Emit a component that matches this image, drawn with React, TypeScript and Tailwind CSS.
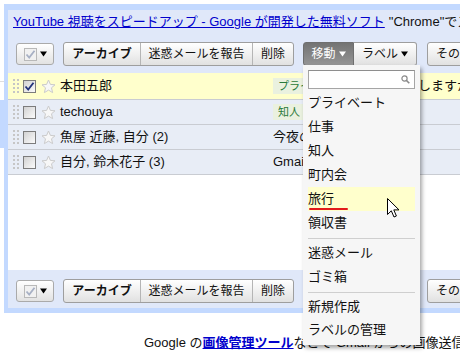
const FONT = "font-['Liberation_Sans','Noto_Sans_CJK_JP',sans-serif]";

type Row = {
  name: string;
  chip?: string;
  subject: string;
  selected?: boolean;
};

const rows: Row[] = [
  { name: "本田五郎", chip: "プライベート", subject: "週末はどうしますか", selected: true },
  { name: "techouya", chip: "知人", subject: "" },
  { name: "魚屋 近藤, 自分 (2)", subject: "今夜の飲み会" },
  { name: "自分, 鈴木花子 (3)", subject: "Gmail の使い方" },
];

function Grip() {
  const dots = [];
  for (const y of [0, 4, 8, 12]) {
    for (const x of [0, 4]) {
      dots.push(<rect key={`${x}-${y}`} x={x} y={y} width="2" height="2" fill="#c6c6c6" />);
    }
  }
  return (
    <svg width="6" height="14" viewBox="0 0 6 14" className="shrink-0">
      {dots}
    </svg>
  );
}

function Checkbox({ checked, faded }: { checked?: boolean; faded?: boolean }) {
  return (
    <span
      className={
        faded
          ? "flex h-[13px] w-[13px] shrink-0 items-center justify-center border border-[#b9b9b9] bg-[#f1f1f1]"
          : "flex h-[13px] w-[13px] shrink-0 items-center justify-center border border-[#7c7c7c] bg-linear-to-br from-[#d2d2d2] to-[#fbfbfb]"
      }
    >
      {checked && (
        <svg width="11" height="11" viewBox="0 0 11 11">
          <path
            d="M1.5 5.5 L4.2 8.5 L9.5 1.8"
            fill="none"
            stroke={faded ? "#a7b0c4" : "#22337a"}
            strokeWidth="1.8"
          />
        </svg>
      )}
    </span>
  );
}

function Star() {
  return (
    <svg width="15" height="15" viewBox="0 0 15 15" className="shrink-0">
      <path
        d="M7.5 1 L9.4 5.4 L14 5.8 L10.5 8.8 L11.6 13.6 L7.5 11.1 L3.4 13.6 L4.5 8.8 L1 5.8 L5.6 5.4 Z"
        fill="#f7f7f7"
        stroke="#cbcbcb"
      />
    </svg>
  );
}

// solid down triangle, drawn so it stays the same size whatever the font
function Arrow({ white }: { white?: boolean }) {
  return (
    <svg width="7" height="6" viewBox="0 0 7 6" className="ml-[3px] shrink-0">
      <path d="M0 0.5 L7 0.5 L3.5 5.5 Z" fill={white ? "#ffffff" : "#000000"} />
    </svg>
  );
}

function MoveMenu() {
  const top = ["プライベート", "仕事", "知人", "町内会", "旅行", "領収書"];
  return (
    <div className="absolute left-0 top-[23px] z-10 w-[117px] bg-[#f6f6f6] pb-[4px] pt-[5px] text-[13px] font-normal text-[#111] shadow-[2px_3px_4px_rgba(0,0,0,0.35)]">
      <div className="mx-[5px] flex h-[19px] items-center justify-end border border-[#a5a5a5] border-t-[#8e8e8e] bg-white pr-[4px]">
        <svg width="9" height="9" viewBox="0 0 9 9">
          <circle cx="3.5" cy="3.5" r="2.6" fill="none" stroke="#8a8a8a" strokeWidth="1.2" />
          <path d="M5.5 5.5 L8.3 8.3" stroke="#8a8a8a" strokeWidth="1.6" />
        </svg>
      </div>
      <div className="mt-[2px]">
        {top.map((t) => (
          <div
            key={t}
            className={`relative mx-[5px] flex h-[24px] items-center ${t === "旅行" ? "bg-[#ffffcc]" : ""}`}
          >
            {t}
            {t === "旅行" && (
              <span className="absolute bottom-[1px] left-[1px] h-[2px] w-[39px] rounded-full bg-[#e21b1b]" />
            )}
          </div>
        ))}
        <div className="mx-[5px] flex h-[6px] items-center">
          <div className="h-px w-full bg-[#cfcfcf]" />
        </div>
        {["迷惑メール", "ゴミ箱"].map((t) => (
          <div key={t} className="mx-[5px] flex h-[24px] items-center">
            {t}
          </div>
        ))}
        <div className="mx-[5px] flex h-[6px] items-center">
          <div className="h-px w-full bg-[#cfcfcf]" />
        </div>
        {["新規作成", "ラベルの管理"].map((t) => (
          <div key={t} className="mx-[5px] flex h-[23px] items-center">
            {t}
          </div>
        ))}
      </div>
    </div>
  );
}

function Toolbar({ withMenu }: { withMenu?: boolean }) {
  return (
    <div className="flex items-center whitespace-nowrap pl-[8px] text-[12px] text-[#111]">
      <div className="flex h-[22px] w-[38px] shrink-0 items-center justify-center rounded-[3px] border border-[#aaaaaa] bg-linear-to-b from-white to-[#e2e2e2]">
        <Checkbox checked faded />
        <Arrow />
      </div>
      <div className="ml-[9px] flex h-[24px] shrink-0 rounded-[3px] border border-[#9e9e9e] bg-linear-to-b from-white to-[#e1e1e1]">
        <div className="flex w-[77px] items-center justify-center border-r border-[#b5b5b5] font-bold">アーカイブ</div>
        <div className="flex w-[112px] items-center justify-center border-r border-[#b5b5b5]">迷惑メールを報告</div>
        <div className="flex w-[40px] items-center justify-center">削除</div>
      </div>
      <div className="relative ml-[9px] flex h-[24px] shrink-0">
        <div className="flex w-[51px] items-center justify-center rounded-l-[3px] border border-[#6f6f6f] bg-linear-to-b from-[#737373] to-[#959595] text-white">
          移動
          <Arrow white />
        </div>
        <div className="flex w-[63px] items-center justify-center rounded-r-[3px] border border-l-0 border-[#9e9e9e] bg-linear-to-b from-white to-[#e1e1e1]">
          ラベル
          <Arrow />
        </div>
        {withMenu && <MoveMenu />}
      </div>
      <div className="ml-[10px] flex h-[24px] w-[80px] shrink-0 items-center rounded-[3px] border border-[#9e9e9e] bg-linear-to-b from-white to-[#e1e1e1] pl-[8px]">
        その他の操作
      </div>
    </div>
  );
}

function MailRow({ row, first }: { row: Row; first?: boolean }) {
  return (
    <div
      className={`flex items-center whitespace-nowrap border-b border-[#c9ccd2] pl-[5px] ${first ? "h-[27px]" : "h-[25px]"} ${row.selected ? "bg-[#ffffcc]" : "bg-[#e8edf6]"}`}
    >
      <Grip />
      <span className="ml-[4px]">
        <Checkbox checked={row.selected} />
      </span>
      <span className="ml-[5px]">
        <Star />
      </span>
      <span className="ml-[4px] w-[213px] shrink-0 text-[13px] text-[#111]">{row.name}</span>
      {row.chip && (
        <span className="mr-[4px] flex h-[16px] items-center bg-[#eaf1df] px-[5px] text-[11px] text-[#2a7a3a]">
          {row.chip}
        </span>
      )}
      <span className="text-[13px] text-[#111]">{row.subject}</span>
    </div>
  );
}

export default function App() {
  return (
    <div className={`relative h-[362px] w-[460px] overflow-hidden bg-white ${FONT} text-[13px] text-[#222]`}>
      <div className="flex">
        <div className="flex w-[4px] shrink-0 flex-col">
          <div className="h-[81px]" />
          <div className="h-px bg-[#dedede]" />
          <div className="h-[18px]" />
          <div className="h-[48px] bg-[#c3d9ff]" />
        </div>
        <div className="mt-[4px] min-w-0 flex-1 border-b-[5px] border-l-4 border-t-[6px] border-[#c3d9ff] bg-[#e0e8f9]">
          <div className="flex h-[24px] items-center overflow-hidden whitespace-nowrap pl-[5px]">
            <span className="text-[#0000cc] underline">YouTube 視聴をスピードアップ - Google が開発した無料ソフト</span>
            <span className="ml-[4px] text-[#111]">"Chrome"でスピーディに</span>
          </div>
          <div className="flex h-[39px] items-start pt-[8px]">
            <Toolbar withMenu />
          </div>
          {rows.map((r, i) => (
            <MailRow key={r.name} row={r} first={i === 0} />
          ))}
          <div className="h-[95px] bg-white" />
          <div className="flex h-[38px] items-start pt-[9px]">
            <Toolbar />
          </div>
        </div>
      </div>
      <div className="mt-[22px] whitespace-nowrap pl-[144px] leading-[16px] text-[#111]">
        Google の<span className="font-bold text-[#0000cc] underline">画像管理ツール</span>などで Gmail からの画像送信
      </div>
      <svg
        width="13"
        height="20"
        viewBox="0 0 13 20"
        className="absolute left-[387px] top-[198px] z-20"
      >
        <path
          d="M0.5 0.5 L0.5 16.5 L4.3 12.8 L7 19 L9.4 18 L6.8 11.9 L12 11.9 Z"
          fill="white"
          stroke="black"
          strokeWidth="1"
        />
      </svg>
    </div>
  );
}
